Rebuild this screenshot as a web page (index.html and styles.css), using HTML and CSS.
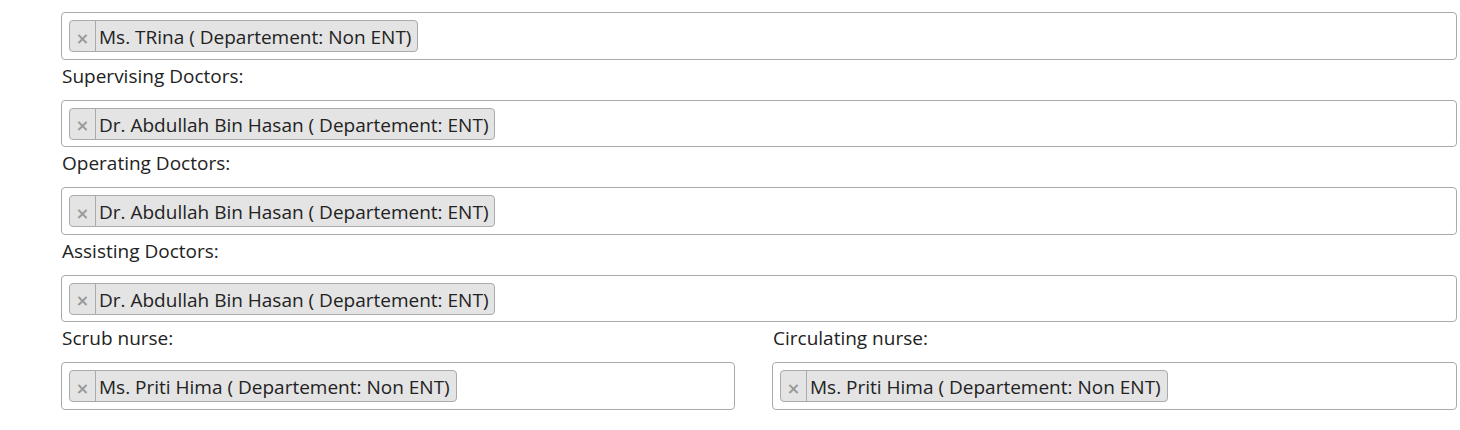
FILE: index.html
```html
<!DOCTYPE html>
<html>
<head>
<meta charset="utf-8">
<link rel="stylesheet" href="styles.css">
</head>
<body>
<div class="form">
  <div class="select"><span class="tag"><span class="rm">×</span><span class="txt">Ms. TRina ( Departement: Non ENT)</span></span></div>
  <label class="lbl">Supervising Doctors:</label>
  <div class="select"><span class="tag"><span class="rm">×</span><span class="txt">Dr. Abdullah Bin Hasan ( Departement: ENT)</span></span></div>
  <label class="lbl">Operating Doctors:</label>
  <div class="select"><span class="tag"><span class="rm">×</span><span class="txt">Dr. Abdullah Bin Hasan ( Departement: ENT)</span></span></div>
  <label class="lbl">Assisting Doctors:</label>
  <div class="select"><span class="tag"><span class="rm">×</span><span class="txt">Dr. Abdullah Bin Hasan ( Departement: ENT)</span></span></div>
  <div class="row">
    <div class="col">
      <label class="lbl">Scrub nurse:</label>
      <div class="select"><span class="tag"><span class="rm">×</span><span class="txt">Ms. Priti Hima ( Departement: Non ENT)</span></span></div>
    </div>
    <div class="col">
      <label class="lbl">Circulating nurse:</label>
      <div class="select"><span class="tag"><span class="rm">×</span><span class="txt">Ms. Priti Hima ( Departement: Non ENT)</span></span></div>
    </div>
  </div>
</div>
</body>
</html>
```
FILE: styles.css
```css
html, body {
  margin: 0;
  padding: 0;
  background: #fff;
}
body {
  font-family: "Open Sans", "Noto Sans", sans-serif;
  font-size: 19px;
  color: #222;
}
.form {
  margin: 12px 3px 0 61px;
  width: 1396px;
}
.select {
  box-sizing: border-box;
  height: 47.5px;
  border: 1px solid #aaa;
  border-radius: 4px;
  padding: 7px 7px 0 7px;
  display: flex;
  align-items: flex-start;
}
.tag {
  box-sizing: border-box;
  height: 32px;
  display: inline-flex;
  align-items: center;
  background: #e4e4e4;
  border: 1px solid #aaa;
  border-radius: 4px;
  white-space: nowrap;
}
.rm {
  box-sizing: border-box;
  width: 26px;
  height: 100%;
  border-right: 1px solid #aaa;
  color: #999;
  font-weight: bold;
  font-size: 16px;
  display: flex;
  align-items: center;
  justify-content: center;
  padding-top: 4px;
  font-family: "DejaVu Sans", sans-serif;
}
.txt {
  padding: 2px 6px 0 3px;
  line-height: 24px;
}
.lbl {
  display: block;
  line-height: 24px;
  margin: 4px 0 12px 1px;
}
.row {
  display: grid;
  grid-template-columns: 674px 1fr;
  column-gap: 37px;
}
```
